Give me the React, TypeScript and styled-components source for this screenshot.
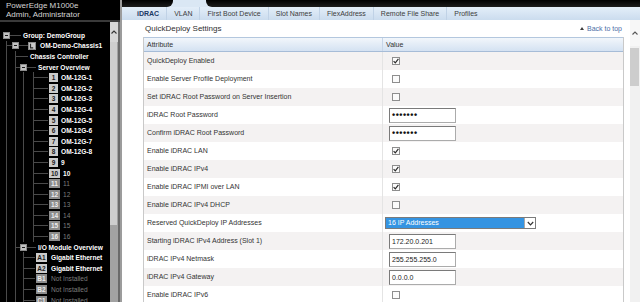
import React from 'react';
import styled, {createGlobalStyle} from 'styled-components';

interface SlotItem {
  badge: string;
  label: string;
  dim?: boolean;
}

type CellValue =
  | {kind: 'check'; checked: boolean}
  | {kind: 'password'}
  | {kind: 'text'; text: string}
  | {kind: 'select'; text: string};

interface SettingRow {
  label: string;
  value: CellValue;
}

const servers: SlotItem[] = [
  ...[1, 2, 3, 4, 5, 6, 7, 8].map(n => ({badge: String(n), label: `OM-12G-${n}`})),
  {badge: '9', label: '9'},
  {badge: '10', label: '10'},
  ...[11, 12, 13, 14, 15, 16].map(n => ({badge: String(n), label: String(n), dim: true})),
];

const ioModules: SlotItem[] = [
  {badge: 'A1', label: 'Gigabit Ethernet'},
  {badge: 'A2', label: 'Gigabit Ethernet'},
  {badge: 'B1', label: 'Not Installed', dim: true},
  {badge: 'B2', label: 'Not Installed', dim: true},
  {badge: 'C1', label: 'Not Installed', dim: true},
];

const subTabs = ['iDRAC', 'VLAN', 'First Boot Device', 'Slot Names', 'FlexAddress', 'Remote File Share', 'Profiles'];

const settings: SettingRow[] = [
  {label: 'QuickDeploy Enabled', value: {kind: 'check', checked: true}},
  {label: 'Enable Server Profile Deployment', value: {kind: 'check', checked: false}},
  {label: 'Set iDRAC Root Password on Server Insertion', value: {kind: 'check', checked: false}},
  {label: 'iDRAC Root Password', value: {kind: 'password'}},
  {label: 'Confirm iDRAC Root Password', value: {kind: 'password'}},
  {label: 'Enable iDRAC LAN', value: {kind: 'check', checked: true}},
  {label: 'Enable iDRAC IPv4', value: {kind: 'check', checked: true}},
  {label: 'Enable iDRAC IPMI over LAN', value: {kind: 'check', checked: true}},
  {label: 'Enable iDRAC IPv4 DHCP', value: {kind: 'check', checked: false}},
  {label: 'Reserved QuickDeploy IP Addresses', value: {kind: 'select', text: '16 IP Addresses'}},
  {label: 'Starting iDRAC IPv4 Address (Slot 1)', value: {kind: 'text', text: '172.20.0.201'}},
  {label: 'iDRAC IPv4 Netmask', value: {kind: 'text', text: '255.255.255.0'}},
  {label: 'iDRAC IPv4 Gateway', value: {kind: 'text', text: '0.0.0.0'}},
  {label: 'Enable iDRAC IPv6', value: {kind: 'check', checked: false}},
];

const ChevronUp = ({color = '#444'}: {color?: string}) => (
  <svg width="6" height="4" viewBox="0 0 6 4">
    <path d="M0.5 3.5 L3 1 L5.5 3.5" stroke={color} strokeWidth="1.1" fill="none" />
  </svg>
);

const ChassisIcon = () => (
  <svg width="8" height="8" viewBox="0 0 8 8" style={{flex: 'none'}}>
    <rect x="0.5" y="0.5" width="7" height="7" fill="#c8c8c8" stroke="#8a8a8a" />
    <path d="M2.5 1.8 V5.8 H5.2" stroke="#2a2a2a" strokeWidth="1.2" fill="none" />
  </svg>
);

const renderValue = (value: CellValue) => {
  switch (value.kind) {
    case 'check':
      return (
        <Checkbox>
          {value.checked && (
            <svg width="6" height="6" viewBox="0 0 6 6">
              <path d="M0.6 3.1 L2.3 4.8 L5.4 0.9" stroke="#2b2b2b" strokeWidth="1.2" fill="none" />
            </svg>
          )}
        </Checkbox>
      );
    case 'password':
      return (
        <TextBox>
          <Dots>•••••••</Dots>
        </TextBox>
      );
    case 'text':
      return <TextBox>{value.text}</TextBox>;
    case 'select':
      return (
        <Select>
          <SelectText>{value.text}</SelectText>
          <SelectButton>
            <svg width="7" height="5" viewBox="0 0 7 5">
              <path d="M0.8 1 L3.5 3.8 L6.2 1" stroke="#333" strokeWidth="1.2" fill="none" />
            </svg>
          </SelectButton>
        </Select>
      );
  }
};

const App = () => {
  return (
    <Page>
      <GlobalStyle />
      <Sidebar>
        <SideHeader>
          <div>PowerEdge M1000e</div>
          <div>Admin, Administrator</div>
        </SideHeader>
        <SideBody>
          <Tree>
            <TreeRow $indent={3}>
              <Toggle />
              <Connector $w={11} />
              <NodeLabel>Group: DemoGroup</NodeLabel>
            </TreeRow>
            <Branch $x={6}>
              <TreeRow $indent={6}>
                <Connector $w={6} />
                <Toggle />
                <Connector $w={9} />
                <ChassisIcon />
                <NodeLabel $gap={4}>OM-Demo-Chassis1</NodeLabel>
              </TreeRow>
              <Branch $x={15}>
                <TreeRow $indent={15}>
                  <Connector $w={13} />
                  <NodeLabel>Chassis Controller</NodeLabel>
                </TreeRow>
                <TreeRow $indent={15}>
                  <Connector $w={5} />
                  <Toggle />
                  <Connector $w={9} />
                  <NodeLabel>Server Overview</NodeLabel>
                </TreeRow>
                <Branch $x={23}>
                  <Branch $x={33}>
                    {servers.map(s => (
                      <TreeRow key={s.badge} $indent={33}>
                        <Connector $w={15} />
                        <Badge $dim={s.dim} $w={s.badge.length > 1 ? 11 : 9}>
                          {s.badge}
                        </Badge>
                        <NodeLabel $gap={3} $dim={s.dim}>
                          {s.label}
                        </NodeLabel>
                      </TreeRow>
                    ))}
                  </Branch>
                </Branch>
                <TreeRow $indent={15}>
                  <Connector $w={5} />
                  <Toggle />
                  <Connector $w={9} />
                  <NodeLabel>I/O Module Overview</NodeLabel>
                </TreeRow>
                <Branch $x={23}>
                  {ioModules.map(m => (
                    <TreeRow key={m.badge} $indent={23}>
                      <Connector $w={12} />
                      <Badge $dim={m.dim} $w={11}>
                        {m.badge}
                      </Badge>
                      <NodeLabel $gap={4} $dim={m.dim}>
                        {m.label}
                      </NodeLabel>
                    </TreeRow>
                  ))}
                </Branch>
              </Branch>
            </Branch>
          </Tree>
          <SideScroll>
            <ScrollButton $bg="#d6d6d6" $h={20}>
              <ChevronUp color="#333" />
            </ScrollButton>
            <Thumb $top={0} $h={183} $bg="#cecece" />
          </SideScroll>
        </SideBody>
      </Sidebar>

      <Main>
        <TopBand>
          <TopTab $w={51} $side="left" />
          <TopTab $side="right" />
        </TopBand>
        <SubTabs>
          {subTabs.map((t, i) => (
            <SubTab key={t} $active={i === 0}>
              {t}
            </SubTab>
          ))}
        </SubTabs>
        <ContentRow>
          <Content>
            <TitleRow>
              <Title>QuickDeploy Settings</Title>
              <BackLink>
                <svg width="4" height="3" viewBox="0 0 4 3">
                  <path d="M0 3 L2 0 L4 3 Z" fill="#3d3d3d" />
                </svg>
                Back to top
              </BackLink>
            </TitleRow>
            <Table>
              <HeadRow>
                <HeadCell>Attribute</HeadCell>
                <HeadCell>Value</HeadCell>
              </HeadRow>
              {settings.map((row, i) => (
                <DataRow key={row.label} $alt={i % 2 === 0}>
                  <AttrCell>{row.label}</AttrCell>
                  <ValueCell>{renderValue(row.value)}</ValueCell>
                </DataRow>
              ))}
            </Table>
          </Content>
          <MainScroll>
            <ScrollButton $bg="#f7f7f7" $h={26}>
              <ChevronUp color="#555" />
            </ScrollButton>
            <Thumb $top={2} $h={38} $bg="#cdcdcd" />
          </MainScroll>
        </ContentRow>
      </Main>
    </Page>
  );
};

export default App;

const GlobalStyle = createGlobalStyle`
  html, body {
    margin: 0;
    padding: 0;
    background: #fff;
  }
  body {
    font-family: 'Liberation Sans', Arial, sans-serif;
  }
  * {
    box-sizing: border-box;
  }
`;

const Page = styled.div`
  display: flex;
  width: 640px;
  height: 302px;
  overflow: hidden;
  font-family: 'Liberation Sans', Arial, sans-serif;
`;

// Left navigation tree

const Sidebar = styled.aside`
  width: 120px;
  flex: none;
  display: flex;
  flex-direction: column;
  background: #000;
`;

const SideHeader = styled.div`
  height: 22px;
  flex: none;
  padding: 1px 0 0 6px;
  font-size: 8px;
  line-height: 9px;
  color: #d4d4d4;
  border-bottom: 2px solid #3a3a3a;
  white-space: nowrap;
`;

const SideBody = styled.div`
  flex: 1;
  min-height: 0;
  display: flex;
`;

const Tree = styled.div`
  flex: 1;
  min-width: 0;
  padding-top: 8px;
  overflow: hidden;
`;

const Branch = styled.div<{$x: number}>`
  background: linear-gradient(#4a4a4a, #4a4a4a) no-repeat;
  background-position: ${p => p.$x}px 0;
  background-size: 1px 100%;
`;

const TreeRow = styled.div<{$indent: number}>`
  display: flex;
  align-items: center;
  height: 10.6px;
  padding-left: ${p => p.$indent}px;
  white-space: nowrap;
`;

const Connector = styled.span<{$w: number}>`
  flex: none;
  width: ${p => p.$w}px;
  height: 1px;
  background: #4a4a4a;
`;

const Toggle = styled.span`
  flex: none;
  display: flex;
  align-items: center;
  justify-content: center;
  width: 7px;
  height: 7px;
  background: #c2c2c2;
  border: 1px solid #8b8b8b;

  &::after {
    content: '';
    width: 3px;
    height: 1px;
    background: #1a1a1a;
  }
`;

const NodeLabel = styled.span<{$gap?: number; $dim?: boolean}>`
  margin-left: ${p => p.$gap ?? 2}px;
  font-size: 6.6px;
  font-weight: ${p => (p.$dim ? 400 : 700)};
  color: ${p => (p.$dim ? '#7c7c7c' : '#fff')};
`;

const Badge = styled.span<{$dim?: boolean; $w: number}>`
  flex: none;
  margin-left: 1px;
  min-width: ${p => p.$w}px;
  height: 9px;
  padding: 0 1px;
  background: ${p => (p.$dim ? '#8c8c8c' : '#cbcbcb')};
  color: ${p => (p.$dim ? '#ececec' : '#1c1c1c')};
  font-size: 6.5px;
  font-weight: 700;
  line-height: 9px;
  text-align: center;
`;

const SideScroll = styled.div`
  width: 10px;
  flex: none;
  display: flex;
  flex-direction: column;
  background: #a2a2a2;
  border-right: 2px solid #6a6a6a;
`;

const ScrollButton = styled.div<{$bg: string; $h: number}>`
  flex: none;
  height: ${p => p.$h}px;
  display: flex;
  align-items: center;
  justify-content: center;
  background: ${p => p.$bg};
`;

const Thumb = styled.div<{$top: number; $h: number; $bg: string}>`
  flex: none;
  margin: ${p => p.$top}px 1px 0 0;
  height: ${p => p.$h}px;
  background: ${p => p.$bg};
`;

// Main panel

const Main = styled.main`
  flex: 1;
  min-width: 0;
  display: flex;
  flex-direction: column;
  border-left: 2px solid #9c9c9c;
  background: #fff;
`;

const TopBand = styled.div`
  flex: none;
  display: flex;
  height: 7px;
  background: #dae7f4;
`;

const TopTab = styled.div<{$w?: number; $side: 'left' | 'right'}>`
  ${p => (p.$w ? `width: ${p.$w}px; flex: none;` : 'flex: 1; margin-left: 33px;')}
  background: linear-gradient(#000, #1c1c1c);
  border-radius: ${p => (p.$side === 'left' ? '0 0 6px 0' : '0 0 0 6px')};
`;

const SubTabs = styled.nav`
  flex: none;
  display: flex;
  height: 13px;
  padding-left: 8px;
  background: linear-gradient(#e3eef9, #cbdcee);
`;

const SubTab = styled.div<{$active?: boolean}>`
  padding: 0 7px;
  font-size: 7px;
  line-height: 13px;
  white-space: nowrap;
  font-weight: ${p => (p.$active ? 700 : 400)};
  color: ${p => (p.$active ? '#1b3864' : '#3d3d3d')};

  & + & {
    border-left: 1px solid #c0d2e6;
  }
`;

const ContentRow = styled.div`
  flex: 1;
  min-height: 0;
  display: flex;
`;

const Content = styled.div`
  flex: 1;
  min-width: 0;
  padding: 0 6px 0 21px;
  overflow: hidden;
`;

const TitleRow = styled.div`
  height: 17px;
  display: flex;
  align-items: center;
  justify-content: space-between;
  padding: 0 2px;
`;

const Title = styled.div`
  font-size: 8px;
  color: #2e2e2e;
`;

const BackLink = styled.a`
  display: flex;
  align-items: center;
  gap: 3px;
  font-size: 7px;
  color: #4c6ea7;
`;

const Table = styled.div`
  border-left: 1px solid #c9c9c9;
  border-right: 1px solid #c9c9c9;
`;

const HeadRow = styled.div`
  display: grid;
  grid-template-columns: 238px 1fr;
  height: 15px;
  background: linear-gradient(#f2f6fb, #d4e2f2);
  border-top: 1px solid #b3c7de;
  border-bottom: 1px solid #a6bcd7;
`;

const HeadCell = styled.div`
  padding-left: 3px;
  font-size: 7px;
  line-height: 13px;
  color: #333;

  & + & {
    border-left: 1px solid #c7d6e8;
  }
`;

const DataRow = styled.div<{$alt?: boolean}>`
  display: grid;
  grid-template-columns: 238px 1fr;
  height: 18px;
  background: ${p => (p.$alt ? '#f4f2f2' : '#fff')};
`;

const AttrCell = styled.div`
  padding-left: 3px;
  font-size: 7px;
  line-height: 18px;
  color: #333;
  white-space: nowrap;
`;

const ValueCell = styled.div`
  display: flex;
  align-items: center;
  padding-left: 6px;
  border-left: 1px solid #e4e4e4;
`;

const Checkbox = styled.span`
  display: flex;
  align-items: center;
  justify-content: center;
  margin-left: 3px;
  width: 8px;
  height: 8px;
  border: 1px solid #8e8e8e;
  background: #fbfbfb;
`;

const TextBox = styled.div`
  width: 67px;
  height: 15px;
  padding-left: 2px;
  background: #fff;
  border: 1px solid #ababab;
  border-top-color: #7a7a7a;
  border-left-color: #7a7a7a;
  font-size: 7px;
  line-height: 13px;
  color: #222;
`;

const Dots = styled.span`
  font-size: 9px;
  font-weight: 700;
  letter-spacing: 0.5px;
  color: #111;
`;

const Select = styled.div`
  display: flex;
  margin-left: -4px;
  width: 151px;
  height: 12px;
  border: 1px solid #7b7b7b;
  background: #fff;
`;

const SelectText = styled.div`
  flex: 1;
  padding-left: 2px;
  background: #3594e2;
  color: #fff;
  font-size: 7px;
  line-height: 10px;
`;

const SelectButton = styled.div`
  width: 11px;
  display: flex;
  align-items: center;
  justify-content: center;
  border-left: 1px solid #a9a9a9;
`;

const MainScroll = styled.div`
  width: 10px;
  flex: none;
  display: flex;
  flex-direction: column;
  background: #f1f1f1;
`;
